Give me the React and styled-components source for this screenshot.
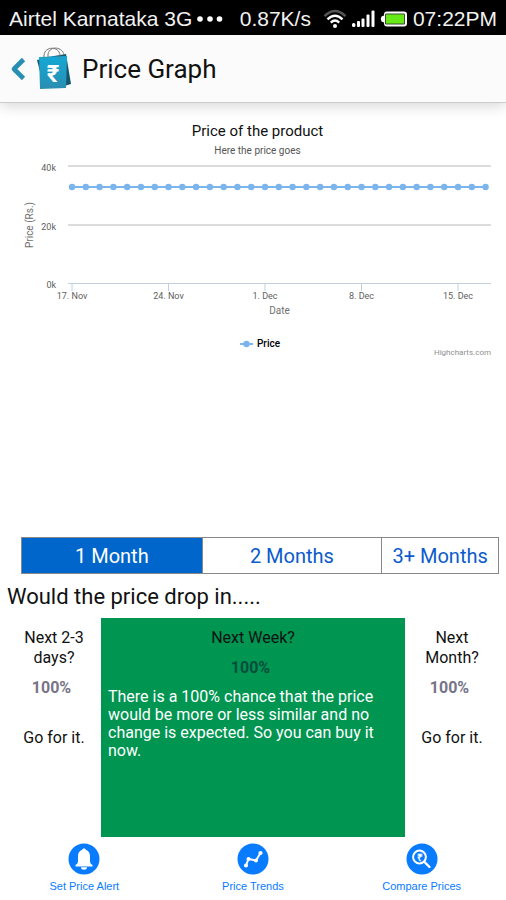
import React, { useState } from 'react'
import styled, { createGlobalStyle } from 'styled-components'

const GlobalStyle = createGlobalStyle`
    * {
        box-sizing: border-box;
    }

    body {
        margin: 0;
        background: #fff;
        color: #111;
        font-family: Roboto, sans-serif;
    }

    button {
        font-family: inherit;
        cursor: pointer;
    }
`

const Screen = styled.div`
    display: flex;
    flex-direction: column;
    min-height: 100vh;
`

const StatusBar = styled.div`
    display: flex;
    align-items: center;
    justify-content: space-between;
    height: 35px;
    padding: 2px 9px 0;
    background: #000;
    color: #f2f2f2;
    font: 21px/24px 'Liberation Sans', sans-serif;
    white-space: nowrap;

    svg {
        flex-shrink: 0;
    }
`

const StatusGroup = styled.div`
    display: flex;
    align-items: center;
    gap: 5px;
`

const Speed = styled.span`
    padding-right: 7px;
`

const Header = styled.header`
    display: flex;
    align-items: center;
    height: 68px;
    padding: 1px 10px 0;
    background: #fbfbfb;
    border-bottom: 1px solid #ccc;
    box-shadow: 0 2px 14px rgba(0, 0, 0, 0.18);
`

const BackButton = styled.button`
    display: flex;
    padding: 0;
    border: 0;
    background: none;
`

const BagLogo = styled.svg`
    margin: 0 10px;
`

const Title = styled.h1`
    margin: 0;
    font-size: 26px;
    line-height: 32px;
    font-weight: 400;
`

const Chart = styled.section`
    display: flex;
    flex-direction: column;
    height: 434px;
    padding: 18px 15px 0 24px;
`

const ChartTitle = styled.h2`
    margin: 0;
    font-size: 15px;
    line-height: 20px;
    font-weight: 400;
    text-align: center;
`

const ChartSubtitle = styled.p`
    margin: 0;
    font-size: 10px;
    line-height: 20px;
    color: #555;
    text-align: center;
`

const PlotGrid = styled.div`
    display: grid;
    grid-template-columns: 12px 32px 1fr;
    align-items: start;
    padding-top: 5px;
`

const AxisName = styled.div`
    font-size: 10px;
    line-height: 12px;
    color: #707070;
    text-align: center;
`

const XAxisName = styled(AxisName)`
    grid-column: 3;
`

const YAxisName = styled(AxisName)`
    height: 118px;
    writing-mode: vertical-rl;
    transform: rotate(180deg);
`

const YLabels = styled.div`
    display: flex;
    flex-direction: column;
    justify-content: space-between;
    height: 129px;
    margin-top: -4px;
    padding-right: 12px;
    font-size: 9px;
    line-height: 12px;
    color: #606060;
    text-align: right;
`

const Plot = styled.svg`
    display: block;
    width: 100%;
    height: 139px;
    overflow: visible;
    font-size: 9px;
`

const Legend = styled.div`
    display: flex;
    align-items: center;
    justify-content: center;
    gap: 4px;
    margin-top: 20px;
    padding-left: 5px;
    font-size: 10px;
    line-height: 14px;
    font-weight: 500;
    color: #000;
`

const Credit = styled.a`
    align-self: flex-end;
    margin-top: -4px;
    font-size: 8px;
    line-height: 12px;
    color: #909090;
    text-decoration: none;
`

const Ranges = styled.div`
    display: grid;
    grid-template-columns: 180fr 180fr 117fr;
    height: 37px;
    margin: 0 7px 0 21px;
    border: 1px solid #888;
`

const RangeButton = styled.button`
    padding: 0;
    border: 0;
    border-left: ${props => (props.$first ? '0' : '1px solid #888')};
    background: ${props => (props.$active ? '#0066cc' : '#fff')};
    color: ${props => (props.$active ? '#fff' : '#0b5bcb')};
    font-size: 20px;
    line-height: 24px;
`

const Question = styled.h2`
    margin: 9px 7px 7px;
    font-size: 22px;
    line-height: 28px;
    font-weight: 400;
`

const Forecasts = styled.div`
    display: grid;
    grid-template-columns: 94fr 304fr 94fr;
    height: 219px;
    padding: 0 7px;
`

const Card = styled.article`
    display: flex;
    flex-direction: column;
    padding: 10px 7px;
    background: ${props => (props.$open ? '#009551' : 'transparent')};
    font-size: 16px;
    line-height: 20px;
    text-align: center;
`

const CardTitle = styled.h3`
    margin: 0;
    font-size: 16px;
    font-weight: 400;
`

const Chance = styled.div`
    margin: 10px 0;
    padding-right: 5px;
    color: ${props => (props.$open ? '#064d3c' : '#777486')};
    font-weight: 700;
`

const Advice = styled.p`
    margin: ${props => (props.$open ? '0' : '20px 0 0')};
    color: ${props => (props.$open ? '#fff' : 'inherit')};
    line-height: ${props => (props.$open ? '18px' : '20px')};
    text-align: ${props => (props.$open ? 'left' : 'center')};
`

const BottomNav = styled.nav`
    display: grid;
    grid-template-columns: repeat(3, 1fr);
    padding-top: 6px;
`

const NavButton = styled.button`
    display: flex;
    flex-direction: column;
    align-items: center;
    gap: 3px;
    padding: 0;
    border: 0;
    background: none;
    color: #087bff;
    font: 11px/16px 'Liberation Sans', sans-serif;
`

const DotsIcon = () => (
    <svg width="26" height="6" fill="#fff">
        <circle cx="3" cy="3" r="2.8" />
        <circle cx="13" cy="3" r="2.8" />
        <circle cx="22.5" cy="3" r="2.8" />
    </svg>
)

const WifiIcon = () => (
    <svg width="24" height="20" viewBox="0 0 24 20" fill="none" strokeWidth="2.4">
        <path d="M1.5 7.2Q12-3 22.5 7.2" stroke="#555" />
        <path d="M4.5 10.3Q12 3 19.5 10.3M7.8 13.6Q12 9.5 16.2 13.6" stroke="#fff" />
        <circle cx="12" cy="17" r="2" fill="#fff" />
    </svg>
)

const SignalIcon = () => (
    <svg width="23" height="17" viewBox="0 0 23 17" fill="#fff">
        <rect x="0" y="13" width="3.4" height="4" rx="1.5" />
        <rect x="5" y="11" width="3" height="6" rx="1" />
        <rect x="9.5" y="8.5" width="3" height="8.5" rx="1" />
        <rect x="14.5" y="4.5" width="3" height="12.5" rx="1" />
        <rect x="19.5" y="0.5" width="3" height="16.5" rx="1" />
    </svg>
)

const BatteryIcon = () => (
    <svg width="28" height="16" viewBox="0 0 28 16">
        <path d="M7 0.5h17q3 0 3 3v9q0 3-3 3H7q-3 0-3-3v-1L1.5 10.500Q0 8 1.5 5.500L4 4.500v-1q0-3 3-3z" fill="#fff" />
        <rect x="5" y="2.5" width="20" height="11" rx="1" fill="#3b4b33" />
        <rect x="6" y="3.5" width="18" height="9" fill="#67e817" />
    </svg>
)

const BackIcon = () => (
    <svg width="16" height="24" viewBox="0 0 16 24" fill="none" stroke="#288fb4" strokeWidth="4.6">
        <path d="M13.5 2.500L4 12l9.5 9.500" strokeLinejoin="round" />
    </svg>
)

const Bag = () => (
    <BagLogo width="36" height="46" viewBox="0 0 36 46">
        <defs>
            <linearGradient id="bag" x1="0" y1="0" x2="0" y2="1">
                <stop offset="0" stopColor="#12a9d6" />
                <stop offset="1" stopColor="#2b8db0" />
            </linearGradient>
        </defs>
        <path d="M12 11l18-3 5 30-10 3z" fill="#14566d" />
        <path d="M1 14l5-1 2 28z" fill="#14566d" />
        <path d="M3 11l28-1-1 32-26 1z" fill="url(#bag)" />
        <path d="M8 13V9C9 0 23 0 24 9v4M12 12V8C14-1 27 1 28 9" fill="none" stroke="#777" strokeWidth="1" />
        <text x="17" y="36" fill="#fff" fontSize="24" fontWeight="700" textAnchor="middle">
            ₹
        </text>
    </BagLogo>
)

// point positions along the x axis, one per day, in percent of the plot width
const POINTS = Array.from({ length: 31 }, (_, i) => 0.95 + i * 3.259)
const TICKS = ['17. Nov', '24. Nov', '1. Dec', '8. Dec', '15. Dec']

const PriceChart = () => (
    <Chart>
        <ChartTitle>Price of the product</ChartTitle>
        <ChartSubtitle>Here the price goes</ChartSubtitle>
        <PlotGrid>
            <YAxisName>Price (Rs.)</YAxisName>
            <YLabels>
                <span>40k</span>
                <span>20k</span>
                <span>0k</span>
            </YLabels>
            <Plot>
                {[0, 59].map(y => (
                    <line key={y} x1="0" x2="100%" y1={y} y2={y} stroke="#dcdcdc" strokeWidth="2" />
                ))}
                <line x1="0" x2="100%" y1="117.5" y2="117.5" stroke="#c0d0e0" />
                {TICKS.map((tick, i) => {
                    const x = `${POINTS[i * 7]}%`
                    return (
                        <g key={tick}>
                            <line x1={x} x2={x} y1="118" y2="125" stroke="#c0d0e0" />
                            <text x={x} y="133" fill="#606060" textAnchor="middle">
                                {tick}
                            </text>
                        </g>
                    )
                })}
                <line x1={`${POINTS[0]}%`} x2={`${POINTS[30]}%`} y1="21" y2="21" stroke="#7cb5ec" strokeWidth="2" />
                {POINTS.map(x => (
                    <circle key={x} cx={`${x}%`} cy="21" r="3.2" fill="#7cb5ec" />
                ))}
            </Plot>
            <XAxisName>Date</XAxisName>
        </PlotGrid>
        <Legend>
            <svg width="13" height="8">
                <path d="M0 4h13" stroke="#7cb5ec" strokeWidth="2" />
                <circle cx="6.5" cy="4" r="3.2" fill="#7cb5ec" />
            </svg>
            Price
        </Legend>
        <Credit href="#highcharts">Highcharts.com</Credit>
    </Chart>
)

const RANGES = ['1 Month', '2 Months', '3+ Months']

const FORECASTS = [
    { title: 'Next 2-3 days?', advice: 'Go for it.' },
    {
        title: 'Next Week?',
        advice:
            'There is a 100% chance that the price would be more or less similar and no change is expected. So you can buy it now.',
        open: true,
    },
    { title: 'Next Month?', advice: 'Go for it.' },
]

const NAV = [
    {
        label: 'Set Price Alert',
        icon: (
            <g fill="#fff">
                <path d="M16 5.5c1 0 1.800.6 2 1.500 2.600.8 4 3 4 6v5c0 2 1 3 2.500 4v1.500h-17V22c1.500-1 2.500-2 2.500-4v-5c0-3 1.400-5.200 4-6 .2-.9 1-1.500 2-1.500z" />
                <path d="M13 24.2a3 2.500 0 0 0 6 0z" />
            </g>
        ),
    },
    {
        label: 'Price Trends',
        icon: (
            <g fill="#fff" stroke="#fff" strokeWidth="2">
                <path d="M9 22.5l2.500-6.500 7.500 1.500 4.500-7.500" fill="none" />
                <circle cx="9" cy="22.5" r="1.1" />
                <circle cx="11.5" cy="16" r="1" />
                <circle cx="19" cy="17.5" r="1" />
                <circle cx="23.5" cy="10" r="1.1" />
            </g>
        ),
    },
    {
        label: 'Compare Prices',
        icon: (
            <g fill="none" stroke="#fff">
                <circle cx="13.5" cy="14" r="6.4" strokeWidth="2" />
                <path d="M18.5 19l5 5" strokeWidth="2.4" strokeLinecap="round" />
                <text x="13.5" y="18" fill="#fff" stroke="none" fontSize="10" fontWeight="700" textAnchor="middle">
                    ₹
                </text>
            </g>
        ),
    },
]

const App = () => {
    const [range, setRange] = useState(RANGES[0])

    return (
        <Screen>
            <GlobalStyle />
            <StatusBar>
                <StatusGroup>
                    Airtel Karnataka 3G
                    <DotsIcon />
                </StatusGroup>
                <StatusGroup>
                    <Speed>0.87K/s</Speed>
                    <WifiIcon />
                    <SignalIcon />
                    <BatteryIcon />
                    07:22PM
                </StatusGroup>
            </StatusBar>
            <Header>
                <BackButton aria-label="Back">
                    <BackIcon />
                </BackButton>
                <Bag />
                <Title>Price Graph</Title>
            </Header>
            <PriceChart />
            <Ranges>
                {RANGES.map((name, i) => (
                    <RangeButton key={name} $first={i === 0} $active={name === range} onClick={() => setRange(name)}>
                        {name}
                    </RangeButton>
                ))}
            </Ranges>
            <Question>Would the price drop in.....</Question>
            <Forecasts>
                {FORECASTS.map(({ title, advice, open }) => (
                    <Card key={title} $open={open}>
                        <CardTitle>{title}</CardTitle>
                        <Chance $open={open}>100%</Chance>
                        <Advice $open={open}>{advice}</Advice>
                    </Card>
                ))}
            </Forecasts>
            <BottomNav>
                {NAV.map(({ label, icon }) => (
                    <NavButton key={label}>
                        <svg width="32" height="32" viewBox="0 0 32 32">
                            <circle cx="16" cy="16" r="15.5" fill="#087bff" />
                            {icon}
                        </svg>
                        {label}
                    </NavButton>
                ))}
            </BottomNav>
        </Screen>
    )
}

export default App
